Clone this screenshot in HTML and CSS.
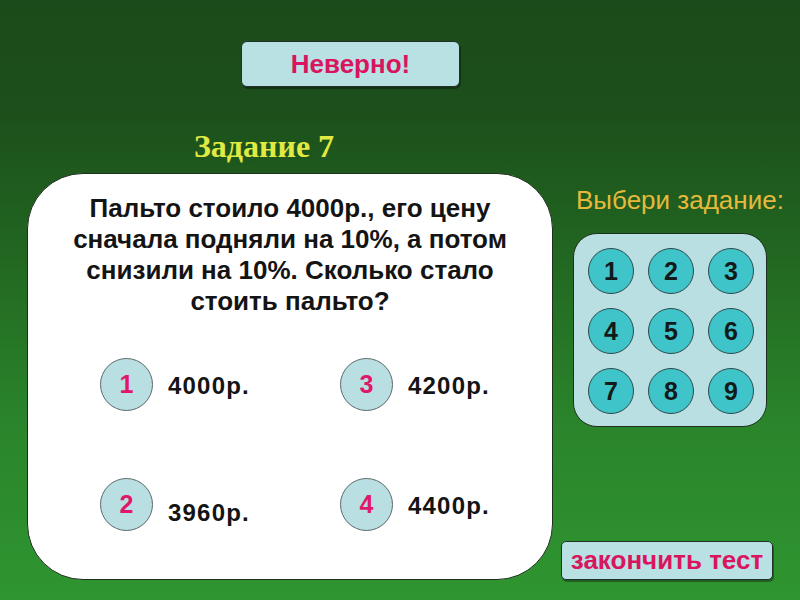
FILE: index.html
```html
<!DOCTYPE html>
<html lang="ru">
<head>
<meta charset="utf-8">
<title>Задание 7</title>
<link rel="stylesheet" href="styles.css">
</head>
<body>
<div class="slide">
  <div class="header">
    <div class="verdict">Неверно!</div>
  </div>
  <div class="main">
    <div class="left">
      <div class="task-title">Задание 7</div>
      <div class="card">
        <p class="question">Пальто стоило 4000р., его цену<br>сначала подняли на 10%, а потом<br>снизили на 10%. Сколько стало<br>стоить пальто?</p>
        <div class="answers">
          <div class="answer"><span class="num">1</span><span class="label">4000р.</span></div>
          <div class="answer"><span class="num">3</span><span class="label">4200р.</span></div>
          <div class="answer"><span class="num">2</span><span class="label low">3960р.</span></div>
          <div class="answer"><span class="num">4</span><span class="label">4400р.</span></div>
        </div>
      </div>
    </div>
    <div class="right">
      <div class="choose">Выбери задание:</div>
      <div class="panel">
        <span class="task">1</span><span class="task">2</span><span class="task">3</span>
        <span class="task">4</span><span class="task">5</span><span class="task">6</span>
        <span class="task">7</span><span class="task">8</span><span class="task">9</span>
      </div>
      <div class="finish">закончить тест</div>
    </div>
  </div>
</div>
</body>
</html>
```

FILE: styles.css
```css
html, body {
  margin: 0;
  padding: 0;
}
body {
  font-family: "Liberation Sans", Arial, sans-serif;
}
.slide {
  width: 800px;
  height: 600px;
  overflow: hidden;
  background: linear-gradient(180deg, #1b4b1a 0%, #1c4f1b 18%, #216420 40%, #2a842b 70%, #2f9530 100%);
}
.header {
  padding-top: 41px;
  padding-left: 241px;
}
.verdict {
  box-sizing: border-box;
  width: 219px;
  height: 46px;
  background: #b9e1e4;
  border: 1px solid #20302a;
  border-radius: 6px;
  box-shadow: 1px 2px 0 rgba(0,0,0,0.35);
  color: #d8155e;
  font-weight: bold;
  font-size: 26px;
  display: flex;
  align-items: center;
  justify-content: center;
}
.main {
  display: flex;
  margin-top: 41px;
}
.left {
  margin-left: 27px;
  width: 526px;
}
.task-title {
  height: 45px;
  padding-right: 52px;
  text-align: center;
  font-family: "Liberation Serif", "Times New Roman", serif;
  font-weight: bold;
  font-size: 32px;
  line-height: 36px;
  color: #e0ea42;
}
.card {
  box-sizing: border-box;
  height: 407px;
  background: #ffffff;
  border: 1px solid #1f2f1f;
  border-radius: 56px;
  padding-top: 19px;
}
.question {
  margin: 0;
  text-align: center;
  font-weight: bold;
  font-size: 26px;
  line-height: 31px;
  color: #141414;
}
.answers {
  display: grid;
  grid-template-columns: 240px 200px;
  row-gap: 67px;
  margin-top: 41px;
  padding-left: 72px;
}
.answer {
  display: flex;
  align-items: center;
  gap: 15px;
}
.num {
  box-sizing: border-box;
  width: 53px;
  height: 53px;
  border-radius: 50%;
  background: #b9dfe2;
  border: 1px solid #5a6a6a;
  color: #e0186a;
  font-weight: bold;
  font-size: 25px;
  display: flex;
  align-items: center;
  justify-content: center;
}
.label {
  font-weight: bold;
  font-size: 24px;
  letter-spacing: 1.2px;
  color: #141414;
  margin-top: 2px;
}
.label.low {
  margin-top: 16px;
}
.right {
  margin-left: 8px;
  width: 239px;
}
.choose {
  margin-top: 57px;
  margin-left: 15px;
  font-size: 26px;
  line-height: 30px;
  color: #e6b93c;
  white-space: nowrap;
}
.panel {
  box-sizing: border-box;
  width: 194px;
  height: 194px;
  margin-top: 18px;
  margin-left: 12px;
  padding: 14px;
  background: #b9dfe2;
  border: 1px solid #1f2f1f;
  border-radius: 24px;
  display: grid;
  grid-template-columns: repeat(3, 46px);
  grid-auto-rows: 46px;
  gap: 14px;
}
.task {
  box-sizing: border-box;
  border-radius: 50%;
  background: #3fc5c9;
  border: 1px solid #2a4a4a;
  color: #121a1a;
  font-weight: bold;
  font-size: 25px;
  display: flex;
  align-items: center;
  justify-content: center;
}
.finish {
  box-sizing: border-box;
  width: 212px;
  height: 39px;
  margin-top: 114px;
  background: #b9e1e4;
  border: 1px solid #20302a;
  border-radius: 5px;
  box-shadow: 1px 2px 0 rgba(0,0,0,0.35);
  color: #d8155e;
  font-weight: bold;
  font-size: 26px;
  display: flex;
  align-items: center;
  justify-content: center;
}
```
